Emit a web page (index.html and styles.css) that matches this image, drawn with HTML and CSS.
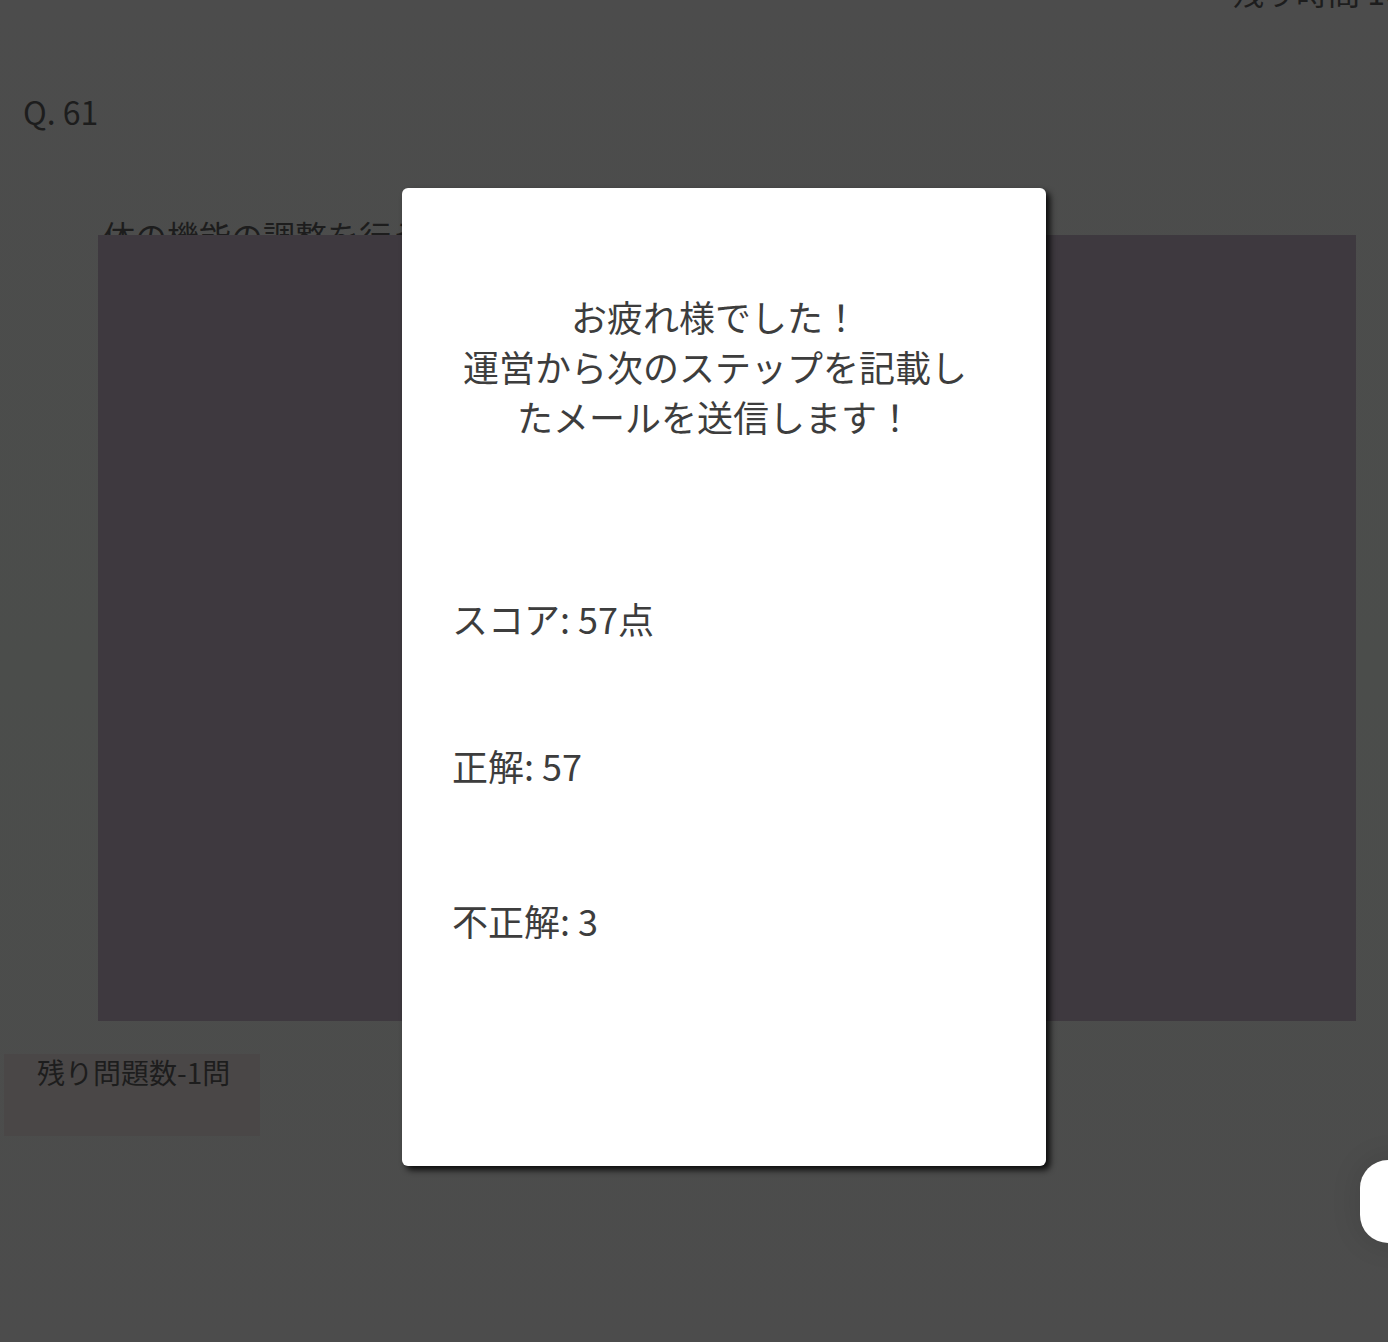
FILE: index.html
```html
<!DOCTYPE html>
<html lang="ja">
<head>
<meta charset="utf-8">
<title>結果</title>
<link rel="stylesheet" href="styles.css">
</head>
<body>
<div class="page">
  <header class="topbar">
    <span class="timer">残り時間 10:00</span>
  </header>
  <div class="qnum">Q. 61</div>
  <div class="question">体の機能の調整を行う器官として正しいものを次から選びなさい。</div>
  <div class="panel"></div>
  <div class="remain">残り問題数-1問</div>
</div>
<div class="fab"></div>
<div class="modal">
  <p class="title">お疲れ様でした！<br>運営から次のステップを記載し<br>たメールを送信します！</p>
  <p class="stat score">スコア: 57点</p>
  <p class="stat correct">正解: 57</p>
  <p class="stat wrong">不正解: 3</p>
</div>
</body>
</html>
```
FILE: styles.css
```css
html, body {
  margin: 0;
  padding: 0;
}
body {
  width: 1388px;
  height: 1342px;
  overflow: hidden;
  background: linear-gradient(180deg, #4c4c4c 0%, #4b4d4b 50%, #4c4c4c 100%);
  font-family: "Noto Sans CJK JP", "Noto Sans", sans-serif;
  color: #1d1d1d;
  position: relative;
}
.page {
  display: flex;
  flex-direction: column;
}
.topbar {
  display: flex;
  justify-content: flex-start;
  padding-left: 1232px;
  margin-top: -29px;
  height: 40px;
  white-space: nowrap;
}
.timer {
  font-size: 32px;
  line-height: 40px;
}
.qnum {
  margin-top: 80px;
  padding-left: 23px;
  font-size: 32px;
  line-height: 40px;
}
.question {
  margin-top: 84px;
  padding-left: 103px;
  font-size: 32px;
  line-height: 40px;
  white-space: nowrap;
}
.panel {
  margin-top: -20px;
  margin-left: 98px;
  width: 1258px;
  height: 786px;
  background: #3e393f;
  position: relative;
}
.remain {
  margin-top: 33px;
  margin-left: 4px;
  width: 223px;
  height: 82px;
  padding: 0 0 0 33px;
  background: #4a4747;
  font-size: 28px;
  line-height: 36px;
}
.fab {
  position: absolute;
  left: 1360px;
  top: 1160px;
  width: 120px;
  height: 83px;
  border-radius: 28px;
  background: #ffffff;
  box-shadow: 0 0 30px rgba(0, 0, 0, 0.12);
}
.modal {
  position: absolute;
  left: 402px;
  top: 188px;
  width: 544px;
  height: 875px;
  padding: 103px 50px 0 50px;
  background: #ffffff;
  border-radius: 6px;
  box-shadow: 4px 4px 6px rgba(0, 0, 0, 0.85);
  color: #3d3d3d;
  font-size: 36px;
  line-height: 50px;
}
.modal p {
  margin: 0;
}
.title {
  text-align: center;
  padding-right: 18px;
}
.score {
  margin-top: 152px !important;
}
.correct {
  margin-top: 97px !important;
}
.wrong {
  margin-top: 105px !important;
}
```
